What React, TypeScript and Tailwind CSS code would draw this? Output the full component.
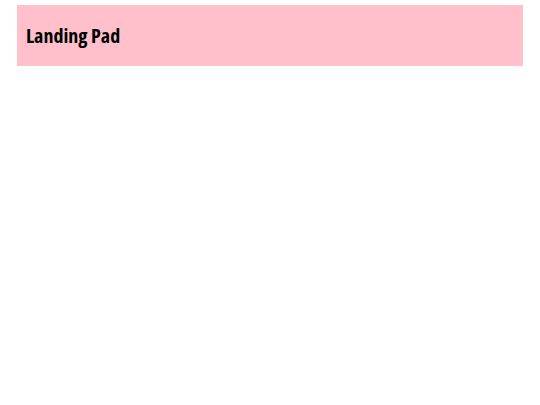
export default function App() {
  return (
    <div className="min-h-[405px] bg-white px-[17px] pt-[5px]">
      <header className="flex h-[61px] items-center bg-[#ffc0cb] px-[9px]">
        <h1
          className="font-['Open_Sans',sans-serif] text-[20px] leading-none font-bold text-black"
          style={{ fontStretch: "condensed" }}
        >
          Landing Pad
        </h1>
      </header>
    </div>
  );
}
